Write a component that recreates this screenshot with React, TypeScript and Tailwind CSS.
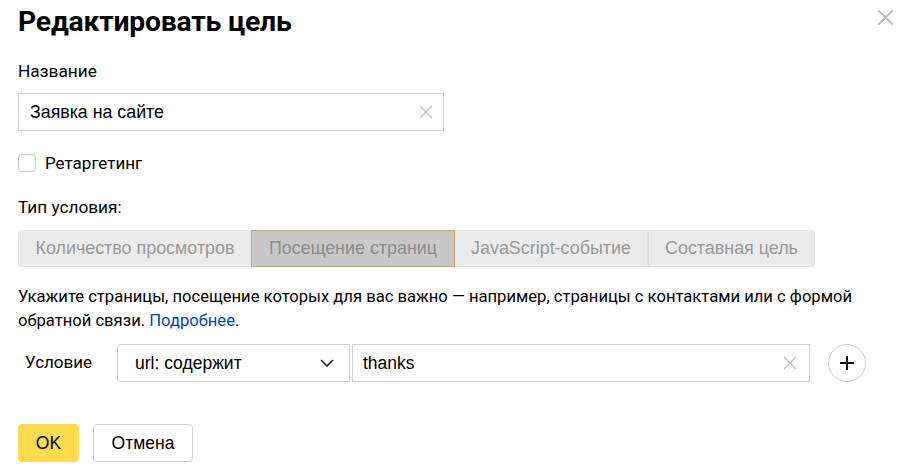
import React from "react";

const XIcon = ({ size = 14, color = "#aaa", sw = 1.2 }: { size?: number; color?: string; sw?: number }) => (
  <svg width={size} height={size} viewBox="0 0 14 14" fill="none">
    <path d="M1 1L13 13M13 1L1 13" stroke={color} strokeWidth={sw} />
  </svg>
);

export default function App() {
  const tabs = [
    { label: "Количество просмотров", w: "w-[233px]", active: false },
    { label: "Посещение страниц", w: "w-[204px]", active: true },
    { label: "JavaScript-событие", w: "w-[193px]", active: false },
    { label: "Составная цель", w: "w-[167px]", active: false },
  ];
  const arial = { fontFamily: "'Liberation Sans', Arial, sans-serif" };
  return (
    <div className="relative w-[902px] h-[469px] bg-white overflow-hidden pl-[18px] text-black" style={{ fontFamily: "Roboto, 'Noto Sans', sans-serif" }}>
      <button className="absolute right-[8px] top-[9px]">
        <XIcon size={17} color="#bdbdbd" sw={1.6} />
      </button>
      <div className="mt-[6px] h-8 leading-8 text-[28.3px] font-bold tracking-[-0.2px]">Редактировать цель</div>
      <div className="mt-[23px] h-5 leading-5 text-[17.3px]">Название</div>
      <div className="mt-[12px] w-[426px] h-[38px] border border-[#cfcfcf] flex items-center pl-[11px] pr-[10px]">
        <span className="flex-1 text-[17.8px]" style={arial}>Заявка на сайте</span>
        <XIcon size={14} color="#b5b5b5" sw={1.1} />
      </div>
      <div className="mt-[22px] h-5 flex items-center gap-[9px]">
        <div className="w-[18px] h-[18px] border border-[#c4c4c4] rounded-[4px]" />
        <span className="text-[17px] leading-5">Ретаргетинг</span>
      </div>
      <div className="mt-[24px] h-5 leading-5 text-[17.2px]">Тип условия:</div>
      <div className="mt-[13px] flex h-[37px]" style={arial}>
        {tabs.map((t, i) => (
          <div
            key={i}
            className={
              t.active
                ? `${t.w} h-full flex items-center justify-center bg-[#c8c8c8] border border-[#c3ab5c] text-[#8c8c8c] text-[17.9px]`
                : `${t.w} h-full flex items-center justify-center bg-[#ebebeb] border border-[#e3e3e3] text-[#999] text-[17.9px] ${i === 0 ? "rounded-l-[4px] border-r-0" : ""} ${i === 3 ? "rounded-r-[4px]" : ""} ${i === 2 ? "border-l-0" : ""} ${i === 3 ? "border-l-[#dcdcdc]" : ""}`
            }
          >
            {t.label}
          </div>
        ))}
      </div>
      <p className="mt-[18px] text-[16.6px] leading-6 text-black whitespace-nowrap">
        Укажите страницы, посещение которых для вас важно — например, страницы с контактами или с формой
        <br />
        обратной связи. <span className="text-[#0044bb]">Подробнее</span>.
      </p>
      <div className="mt-[11px] flex items-center h-[38px]">
        <span className="w-[99px] pl-[7px] text-[17px]">Условие</span>
        <div className="w-[233px] h-full border border-[#d0d0d0] rounded-l-[4px] flex items-center pl-[17px] pr-[15px]" style={arial}>
          <span className="flex-1 text-[17.5px]">url: содержит</span>
          <svg width="14" height="8" viewBox="0 0 14 8" fill="none">
            <path d="M1 1L7 7L13 1" stroke="#222" strokeWidth="1.6" />
          </svg>
        </div>
        <div className="ml-[2px] w-[458px] h-full border border-[#d0d0d0] flex items-center pl-[10px] pr-[12px]" style={arial}>
          <span className="flex-1 text-[17.5px]">thanks</span>
          <XIcon size={14} color="#b5b5b5" sw={1.1} />
        </div>
        <button className="ml-[18px] w-[38px] h-[38px] rounded-full border border-[#cccccc] flex items-center justify-center">
          <svg width="16" height="16" viewBox="0 0 16 16" fill="none">
            <path d="M8 1V15M1 8H15" stroke="#111" strokeWidth="2" />
          </svg>
        </button>
      </div>
      <div className="mt-[42px] flex gap-[14px] h-[38px]" style={arial}>
        <button className="w-[61px] h-full bg-[#ffdb4d] rounded-[4px] text-[17.5px] text-black">OK</button>
        <button className="w-[100px] h-full border border-[#cfcfcf] rounded-[4px] text-[17.5px] text-black">Отмена</button>
      </div>
    </div>
  );
}
